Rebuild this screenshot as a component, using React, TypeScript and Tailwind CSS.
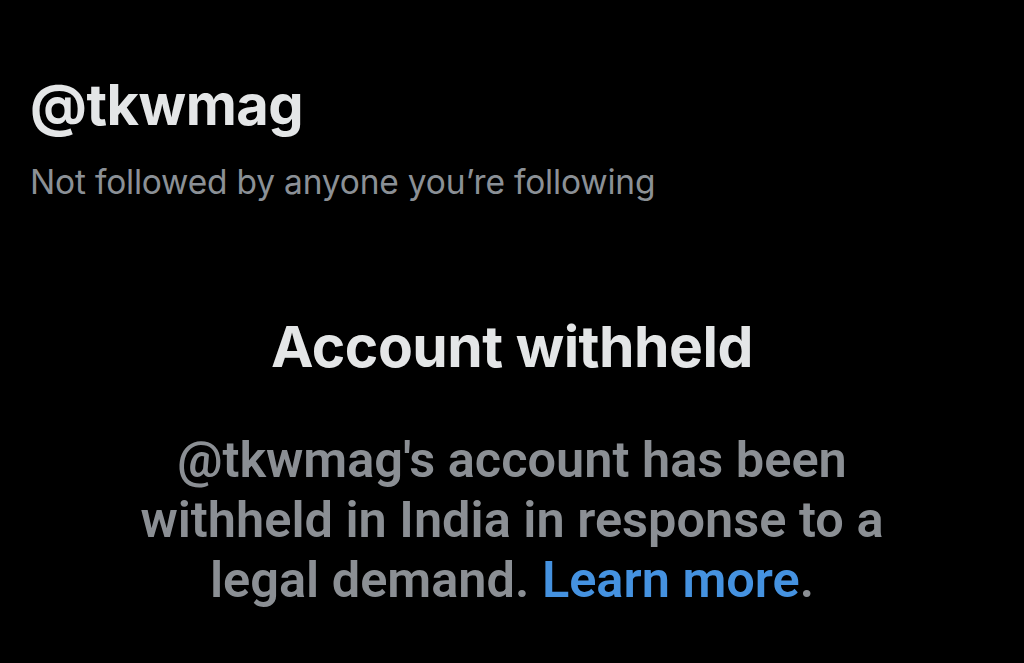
export default function App() {
  return (
    <main
      className="h-[663px] w-[1024px] overflow-hidden bg-black"
      style={{ fontFamily: 'Inter, "Noto Sans", sans-serif' }}
    >
      <div className="px-[30px] pt-[73px]">
        <h1 className="text-[56px] font-bold leading-[64px] tracking-[-0.5px] text-[#e4e6e7]">@tkwmag</h1>
        <p className="mt-[25px] text-[33.5px] leading-[40px] tracking-[-0.2px] text-[#8b9096]">
          Not followed by anyone you’re following
        </p>
      </div>

      <section className="mx-auto mt-[113px] w-[900px] text-center">
        <h2 className="text-[57px] font-bold leading-[64px] tracking-[-0.5px] text-[#e4e6e7]">
          Account withheld
        </h2>
        <p
          className="mx-auto mt-[51px] w-[790px] text-[50.5px] font-semibold leading-[60px] text-[#8b8f94]"
          style={{ fontFamily: 'Roboto, "Noto Sans", sans-serif' }}
        >
          @tkwmag's account has been withheld in India in response to a legal demand.{' '}
          <a href="#" className="text-[#4592e0]">
            Learn more
          </a>
          .
        </p>
      </section>
    </main>
  );
}
